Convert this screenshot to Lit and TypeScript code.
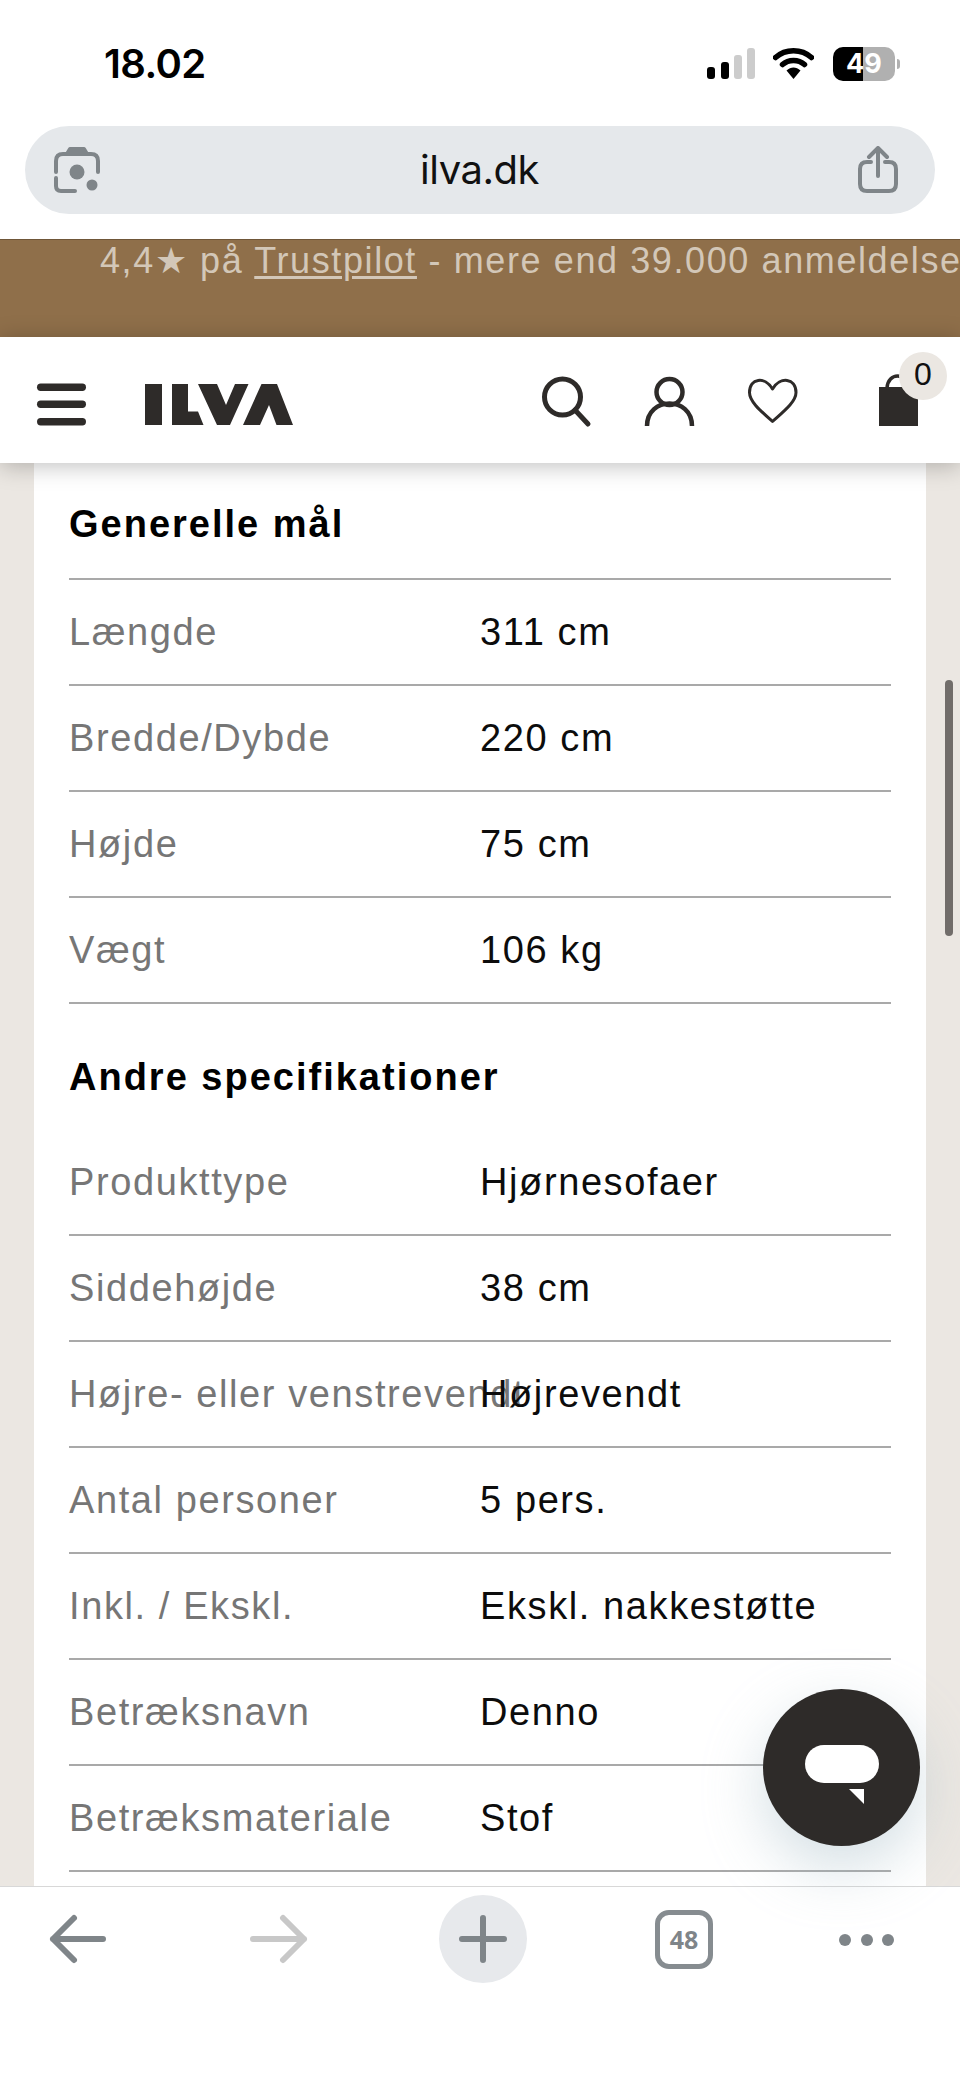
import { LitElement, html, css, svg } from "lit";
import { customElement } from "lit/decorators.js";

const GENERAL = [
  ["Længde", "311 cm"],
  ["Bredde/Dybde", "220 cm"],
  ["Højde", "75 cm"],
  ["Vægt", "106 kg"],
];
const OTHER = [
  ["Produkttype", "Hjørnesofaer"],
  ["Siddehøjde", "38 cm"],
  ["Højre- eller venstrevendt", "Højrevendt"],
  ["Antal personer", "5 pers."],
  ["Inkl. / Ekskl.", "Ekskl. nakkestøtte"],
  ["Betræksnavn", "Denno"],
  ["Betræksmateriale", "Stof"],
];

@customElement("app-root")
export class AppRoot extends LitElement {
  static styles = css`
    :host { display: block; width: 960px; height: 2078px; position: relative; overflow: hidden; background: #fff; font-family: "Liberation Sans", Arial, sans-serif; }
    .page { display: flex; flex-direction: column; height: 2078px; }
    .status { height: 126px; flex: none; display: flex; align-items: flex-start; padding: 43px 65px 0 104px; box-sizing: border-box; justify-content: space-between; }
    .time { font-family: Inter, sans-serif; font-weight: 600; font-size: 40px; line-height: 42px; letter-spacing: -0.6px; color: #000; }
    .sicons { display: flex; align-items: flex-start; margin-top: 4px; }
    .sicons svg { display: block; }
    .battery { width: 62px; height: 34px; border-radius: 10px; margin-left: 19px; background: linear-gradient(90deg, #000 48%, #b0b0b0 48%); color: #fff; font-family: Inter, sans-serif; font-weight: 700; font-size: 27px; line-height: 34px; text-align: center; position: relative; }
    .battery::after { content: ""; position: absolute; left: 64px; top: 12px; width: 3px; height: 10px; border-radius: 0 5px 5px 0; background: #b0b0b0; }
    .urlwrap { height: 113px; flex: none; padding: 0 25px; box-sizing: border-box; }
    .url { height: 88px; border-radius: 44px; background: #e5e8eb; display: flex; align-items: center; justify-content: space-between; padding: 0 36px 0 29px; }
    .url span { font-family: Inter, sans-serif; font-size: 40px; line-height: 48px; color: #111; letter-spacing: -0.5px; }
    .banner { height: 98px; flex: none; background: #8f6f4a; border-top: 1px solid #6f5638; box-sizing: border-box; position: relative; display: flex; justify-content: space-between; padding: 0 45px 0 100px; }
    .banner p { margin: 0; font-family: "Liberation Sans Narrow", "Liberation Sans", sans-serif; font-size: 36px; line-height: 42px; letter-spacing: 1.6px; color: #d3c7b8; white-space: nowrap; }
    .banner a { color: inherit; text-decoration: underline; text-underline-offset: 3px; }
    .banner svg { margin-top: 33px; }
    .head { height: 126px; flex: none; background: #fff; position: relative; z-index: 2; box-shadow: 0 3px 22px rgba(0,0,0,.25); display: flex; align-items: flex-start; padding: 0; }
    .head svg { display: block; position: absolute; top: 0; left: 0; }
    .badge { position: absolute; left: 899px; top: 15px; width: 48px; height: 48px; border-radius: 50%; background: #ebe7e2; color: #111; font-family: "Liberation Sans Narrow", "Liberation Sans", sans-serif; font-size: 32px; line-height: 44px; text-align: center; }
    .main { flex: 1; min-height: 0; overflow: hidden; background: #ebe7e2; padding: 0 34px; }
    .card { background: #fff; padding: 0 35px; height: 100%; box-sizing: border-box; font-family: "Liberation Sans Narrow", "Liberation Sans", sans-serif; font-size: 38px; letter-spacing: 1.6px; }
    h2 { margin: 0; font-size: 38px; font-weight: 700; color: #000; letter-spacing: 2px; line-height: 46px; }
    .h1 { padding-top: 38px; height: 117px; box-sizing: border-box; border-bottom: 2px solid #a9a9a9; }
    .h2 { padding-top: 50px; height: 126px; box-sizing: border-box; }
    .row { display: grid; grid-template-columns: 411px 1fr; align-items: center; height: 106px; box-sizing: border-box; border-bottom: 2px solid #a9a9a9; white-space: nowrap; }
    .row .l { color: #767676; }
    .row .v { color: #0c0c0c; }
    .tool { height: 192px; flex: none; border-top: 1px solid #d8d8d8; background: #fff; box-sizing: border-box; display: flex; align-items: flex-start; padding-top: 8px; }
    .tool > svg { display: block; }
    .plus { width: 88px; height: 88px; border-radius: 50%; background: #e7e9ec; margin-left: 130px; flex: none; }
    .plus svg { display: block; }
    .tabs { width: 58px; height: 59px; box-sizing: border-box; border: 5px solid #868c90; border-radius: 14px; margin: 15px 0 0 128px; color: #7f8589; font-family: "Open Sans", sans-serif; font-weight: 700; font-size: 25px; line-height: 49px; text-align: center; flex: none; }
    .dots { display: flex; gap: 9.5px; margin: 39px 0 0 126px; }
    .dots i { width: 12px; height: 12px; border-radius: 50%; background: #7f8589; display: block; }
    .chat { position: absolute; left: 763px; top: 1689px; width: 157px; height: 157px; border-radius: 50%; background: #2e2b29; box-shadow: 0 22px 60px rgba(160,185,195,.45); z-index: 3; }
    .chat svg { display: block; }
    .thumb { position: absolute; left: 945px; top: 680px; width: 8px; height: 256px; border-radius: 4px; background: #716d6a; z-index: 1; }
  `;

  private row(r: string[]) {
    return html`<div class="row"><span class="l">${r[0]}</span><span class="v">${r[1]}</span></div>`;
  }

  render() {
    return html`<div class="page">
      <div class="status">
        <span class="time">18.02</span>
        <div class="sicons">
          <svg width="48" height="32" viewBox="0 0 48 32">
            <rect x="0" y="20" width="8" height="12" rx="3" fill="#000"/>
            <rect x="14" y="15" width="8" height="17" rx="3" fill="#000"/>
            <rect x="27" y="8" width="8" height="24" rx="3" fill="#ccc"/>
            <rect x="40" y="1" width="8" height="31" rx="3" fill="#ccc"/>
          </svg>
          <svg style="margin-left:18px" width="41" height="32" viewBox="0 0 41 32">
            <path d="M2.500 10.500C12.500 1.500 28.500 1.500 38.500 10.500" fill="none" stroke="#000" stroke-width="5.500" stroke-linecap="round"/>
            <path d="M9.500 17.500C15.500 12 25.500 12 31.500 17.500" fill="none" stroke="#000" stroke-width="5.500" stroke-linecap="round"/>
            <path d="M13.500 23.500C18 19.500 23 19.500 27.500 23.500L20.500 32Z" fill="#000"/>
          </svg>
          <div class="battery">49</div>
        </div>
      </div>
      <div class="urlwrap"><div class="url">
        <svg width="48" height="48" viewBox="0 0 48 48" fill="none" stroke="#7f8589" stroke-width="4" stroke-linecap="round">
          <path d="M2 26V15Q2 8 9 8H37Q44 8 44 15V26"/>
          <path d="M2 32V40Q2 45 7 45H21"/>
          <path d="M13 8L16 3H30L33 8Z" fill="#7f8589" stroke-linejoin="round"/>
          <circle cx="23" cy="26" r="7.500" fill="#7f8589" stroke="none"/>
          <circle cx="38" cy="39" r="5.500" fill="#7f8589" stroke="none"/>
        </svg>
        <span>ilva.dk</span>
        <svg width="42" height="48" viewBox="0 0 42 48" fill="none" stroke="#7f8589" stroke-width="4" stroke-linecap="round" stroke-linejoin="round">
          <path d="M14 16H10Q3 16 3 23V38Q3 45 10 45H32Q39 45 39 38V23Q39 16 32 16H28"/>
          <path d="M21 30V2M12 11L21 2L30 11"/>
        </svg>
      </div></div>
      <div class="banner">
        <p>4,4★ på <a>Trustpilot</a> - mere end 39.000 anmeldelser</p>
        <svg width="30" height="30" viewBox="0 0 30 30"><path d="M3 3L27 27M27 3L3 27" stroke="#fff" stroke-width="6"/></svg>
      </div>
      <div class="head">
        <svg width="960" height="126" viewBox="0 337 960 126">
          <g fill="#2e2b29">
            <rect x="37" y="383.500" width="49" height="7.500" rx="3.700"/>
            <rect x="37" y="400.500" width="49" height="7.500" rx="3.700"/>
            <rect x="37" y="418" width="49" height="7.500" rx="3.700"/>
            <path d="M145 384H162V425H145Z"/>
            <path d="M172 384H188V411.500H198L203.500 425H172Z"/>
            <path d="M198 384H217L226 405L235 384H248.500L230 425H217Z"/>
            <path d="M243 425L261.500 384H277L293 425H276.500L269 405L260 425Z"/>
            <path d="M879 387H918V426H879Z"/>
          </g>
          <g fill="none" stroke="#2e2b29" stroke-width="4.500">
            <circle cx="562.500" cy="397" r="18" stroke-width="5"/>
            <path d="M575 410L588 424" stroke-width="5" stroke-linecap="round"/>
            <circle cx="669.500" cy="392" r="13"/>
            <path d="M647 426C647 396 692 396 692 426"/>
            <path d="M772.500 389C765 376 749.500 378 749.500 392.500C749.500 402 762 412 772.500 421.500C783 412 796 402 796 392.500C796 378 780 376 772.500 389Z" stroke-width="3" stroke-linejoin="round"/>
            <path d="M887 388C888 372 907 372 908 388" stroke-width="3.500"/>
          </g>
        </svg>
        <div class="badge">0</div>
      </div>
      <div class="main"><div class="card">
        <div class="h1"><h2>Generelle mål</h2></div>
        ${GENERAL.map((r) => this.row(r))}
        <div class="h2"><h2>Andre specifikationer</h2></div>
        ${OTHER.map((r) => this.row(r))}
      </div></div>
      <div class="tool">
        <svg style="margin-left:48px" width="60" height="88" viewBox="0 0 60 88" fill="none" stroke="#7f8589" stroke-width="6" stroke-linecap="round" stroke-linejoin="round"><path d="M5 44H55M26 23L5 44L26 65"/></svg>
        <svg style="margin-left:141px" width="60" height="88" viewBox="0 0 60 88" fill="none" stroke="#c8c8c8" stroke-width="6" stroke-linecap="round" stroke-linejoin="round"><path d="M4 44H55M34 23L55 44L34 65"/></svg>
        <div class="plus"><svg width="88" height="88" viewBox="0 0 88 88" fill="none" stroke="#7f8589" stroke-width="6" stroke-linecap="round"><path d="M44 23V65M23 44H65"/></svg></div>
        <div class="tabs">48</div>
        <div class="dots"><i></i><i></i><i></i></div>
      </div>
    </div>
    <div class="thumb"></div>
    <div class="chat">
      <svg width="157" height="157" viewBox="0 0 157 157">
        <rect x="42" y="56" width="74" height="38" rx="19" fill="#fff"/>
        <path d="M86 100H101V115Z" fill="#fff"/>
      </svg>
    </div>`;
  }
}
